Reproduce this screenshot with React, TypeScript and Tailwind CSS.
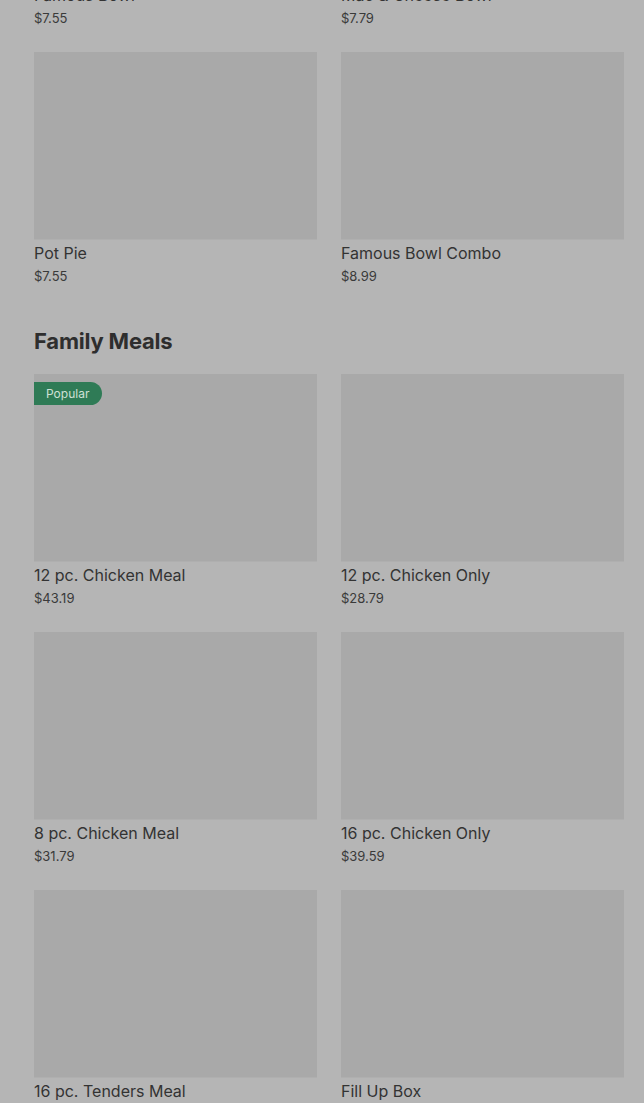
import React from 'react';

type Item = { name: string; price: string; popular?: boolean };

const topItems: Item[] = [
  { name: 'Famous Bowl', price: '$7.55' },
  { name: 'Mac & Cheese Bowl', price: '$7.79' },
  { name: 'Pot Pie', price: '$7.55' },
  { name: 'Famous Bowl Combo', price: '$8.99' },
];

const familyMeals: Item[] = [
  { name: '12 pc. Chicken Meal', price: '$43.19', popular: true },
  { name: '12 pc. Chicken Only', price: '$28.79' },
  { name: '8 pc. Chicken Meal', price: '$31.79' },
  { name: '16 pc. Chicken Only', price: '$39.59' },
  { name: '16 pc. Tenders Meal', price: '$54.99' },
  { name: 'Fill Up Box', price: '$8.99' },
];

const MenuCard: React.FC<{ item: Item }> = ({ item }) => (
  <div className="flex flex-col">
    <div className="relative h-[188px] bg-[#a9a9a9] border-b border-[#afafaf]">
      {item.popular && (
        <span className="absolute left-0 top-[8px] h-[23px] pl-[12px] pr-[13px] rounded-r-full bg-[#2f7b56] text-[#cfe0d5] text-[12px] leading-[23px]">
          Popular
        </span>
      )}
    </div>
    <div className="mt-[1px] text-[16px] leading-[24px] text-[#333333]">{item.name}</div>
    <div className="mt-[2px] text-[13px] leading-[18px] text-[#3a3a3a]">{item.price}</div>
  </div>
);

const App: React.FC = () => {
  return (
    <div
      className="w-[644px] h-[1103px] overflow-hidden bg-[#b5b5b5] pl-[34px] pr-[20px]"
      style={{ fontFamily: 'Inter, "Noto Sans", sans-serif' }}
    >
      <div className="grid grid-cols-2 gap-x-[24px] gap-y-[25px] mt-[-206px]">
        {topItems.map((item) => (
          <MenuCard key={item.name} item={item} />
        ))}
      </div>
      <h2 className="mt-[40px] mb-[17px] text-[22px] leading-[32px] font-bold text-[#2e2e2e] tracking-[-0.2px]">
        Family Meals
      </h2>
      <div className="grid grid-cols-2 gap-x-[24px] gap-y-[25px]">
        {familyMeals.map((item) => (
          <MenuCard key={item.name} item={item} />
        ))}
      </div>
    </div>
  );
};

export default App;
